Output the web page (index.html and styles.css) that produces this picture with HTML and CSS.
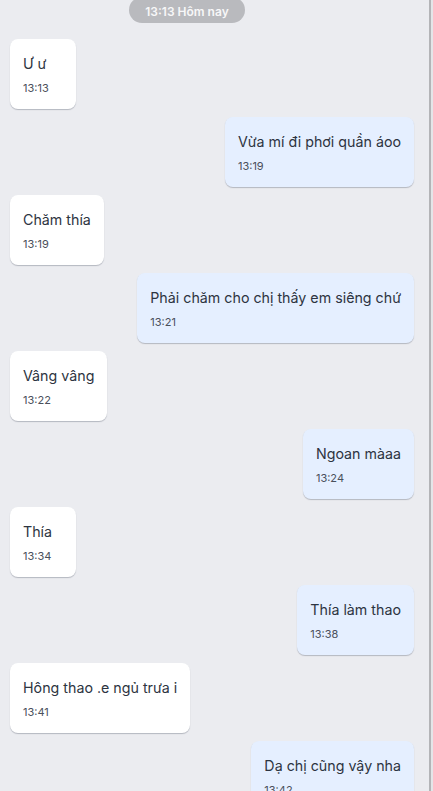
FILE: index.html
```html
<!DOCTYPE html>
<html lang="vi">
<head>
<meta charset="utf-8">
<link rel="stylesheet" href="styles.css">
</head>
<body>
<div class="app">
  <div class="chat">
    <div class="date-row"><span class="date-pill">13:13 Hôm nay</span></div>
    <div class="messages">
      <div class="msg in"><div class="text">Ư ư</div><div class="time">13:13</div></div>
      <div class="msg out"><div class="text">Vừa mí đi phơi quần áoo</div><div class="time">13:19</div></div>
      <div class="msg in"><div class="text">Chăm thía</div><div class="time">13:19</div></div>
      <div class="msg out"><div class="text">Phải chăm cho chị thấy em siêng chứ</div><div class="time">13:21</div></div>
      <div class="msg in"><div class="text">Vâng vâng</div><div class="time">13:22</div></div>
      <div class="msg out"><div class="text">Ngoan màaa</div><div class="time">13:24</div></div>
      <div class="msg in"><div class="text">Thía</div><div class="time">13:34</div></div>
      <div class="msg out"><div class="text">Thía làm thao</div><div class="time">13:38</div></div>
      <div class="msg in"><div class="text">Hông thao .e ngủ trưa i</div><div class="time">13:41</div></div>
      <div class="msg out"><div class="text">Dạ chị cũng vậy nha</div><div class="time">13:42</div></div>
    </div>
  </div>
  <div class="scrollbar"></div>
</div>
</body>
</html>
```
FILE: styles.css
```css
* { box-sizing: border-box; }
html, body { margin: 0; padding: 0; }
body {
  background: #ebecf0;
  font-family: Inter, "Noto Sans", "Liberation Sans", sans-serif;
  width: 433px;
  height: 791px;
  overflow: hidden;
}
.app {
  display: flex;
  height: 791px;
}
.chat {
  flex: 1;
  overflow: hidden;
  display: flex;
  flex-direction: column;
}
.date-row {
  display: flex;
  margin-top: -3px;
  padding-left: 129px;
}
.date-pill {
  width: 116px;
  height: 26px;
  border-radius: 13px;
  background: #b9babe;
  color: #f7f7f8;
  font-size: 12px;
  font-weight: 600;
  display: flex;
  align-items: center;
  justify-content: center;
  padding-top: 2px;
}
.messages {
  display: flex;
  flex-direction: column;
  gap: 8px;
  padding: 16px 15px 0 10px;
}
.msg {
  min-width: 66px;
  max-width: 340px;
  padding: 15px 13px 14px;
  border-radius: 8px;
  box-shadow: 0 1px 1px rgba(40, 50, 70, 0.28);
}
.msg.in {
  align-self: flex-start;
  background: #ffffff;
}
.msg.out {
  align-self: flex-end;
  background: #e5efff;
}
.text {
  font-size: 14.25px;
  line-height: 20px;
  color: #2d3441;
  white-space: nowrap;
}
.time {
  margin-top: 7px;
  font-size: 11px;
  line-height: 14px;
  color: #4a505b;
}
.scrollbar {
  width: 4px;
  border-left: 2px solid #b3b4b7;
  background: #e4e5e8;
}
```
